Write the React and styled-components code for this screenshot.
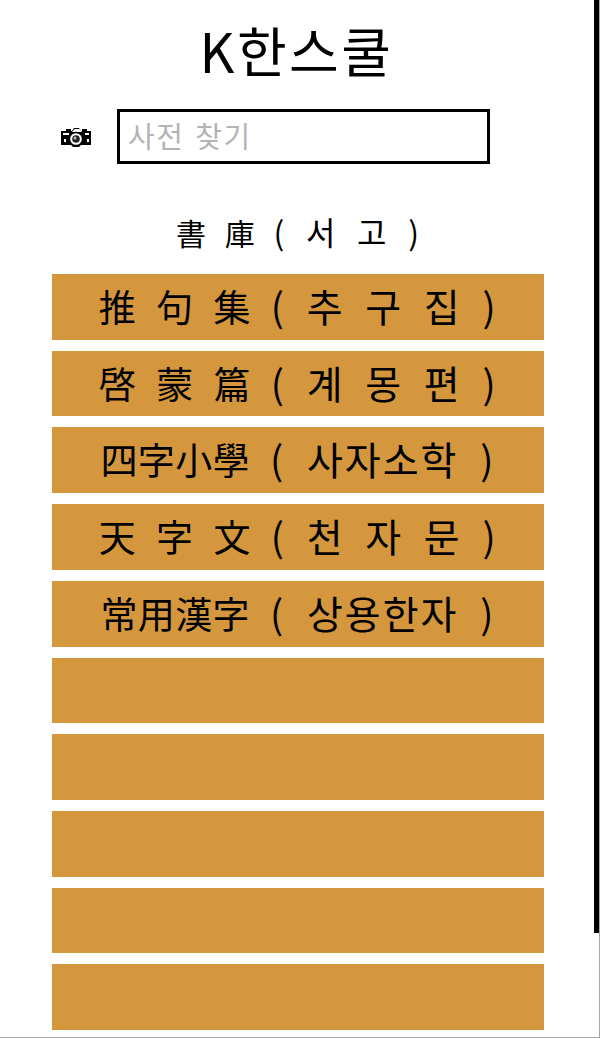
import React from 'react'
import styled, { createGlobalStyle } from 'styled-components'

const GlobalStyle = createGlobalStyle`
	html, body {
		margin: 0;
		padding: 0;
		background: #fff;
	}
	body {
		font-family: "Noto Sans CJK KR", "Noto Sans", sans-serif;
	}
`
const Page = styled.div`
	position: relative;
	box-sizing: border-box;
	width: 600px;
	height: 1038px;
	overflow: hidden;
	display: flex;
	flex-direction: column;
	align-items: center;
	background: #fff;
	color: #000;
	border-right: 1px solid #a8a8a8;
	border-bottom: 1px solid #a8a8a8;
`
const ScrollThumb = styled.div`
	position: absolute;
	top: 0;
	right: -1px;
	width: 6px;
	height: 933px;
	background: #000;
`
const Title = styled.h1`
	margin: 13px 0 0;
	padding-right: 6px;
	height: 74px;
	line-height: 74px;
	font-size: 54px;
	font-weight: 400;
	letter-spacing: 2.5px;
`
const SearchRow = styled.div`
	align-self: flex-start;
	display: flex;
	align-items: center;
	margin: 22px 0 0 60px;
	gap: 25px;
`
const SearchInput = styled.input`
	box-sizing: border-box;
	width: 373px;
	height: 55px;
	padding: 0 8px 4px;
	background: #fff;
	border: 3px solid #000;
	border-radius: 0;
	outline: none;
	font-family: inherit;
	font-size: 29px;
	letter-spacing: 1.5px;
	word-spacing: 3px;
	color: #000;
	&::placeholder {
		color: #b4b4b4;
		opacity: 1;
	}
`
const Shelf = styled.h2`
	margin: 39px 0 0;
	padding-right: 3px;
	height: 56px;
	line-height: 56px;
	font-size: 30px;
	font-weight: 400;
	white-space: pre;
	word-spacing: 12px;
`
const ShelfHangul = styled.span`
	font-size: 32px;
	letter-spacing: 1px;
	word-spacing: 12.5px;
`
const BookList = styled.div`
	align-self: flex-start;
	margin: 15px 0 0 52px;
	width: 492px;
	display: flex;
	flex-direction: column;
	gap: 11px;
`
const BookButton = styled.div`
	height: 65.72px;
	line-height: 62px;
	text-align: center;
	background: #d4973e;
	font-size: 37px;
	white-space: pre;
	word-spacing: 12px;
`
const BookHanja = styled.span`
	letter-spacing: ${props => (props.$tight ? '0.3px' : '0')};
`
const BookHangul = styled.span`
	font-size: 39px;
	letter-spacing: ${props => (props.$tight ? '2px' : '1.5px')};
	word-spacing: 11px;
`
const CameraIcon = () => (
	<svg width="32" height="20" viewBox="0 0 32 20" aria-hidden="true">
		<path d="M1 4h5V2h5v2h1l2-3h5l2 3h1V2h5v2h4v14H21a6 6 0 0 1-10 0H1z" fill="#000" />
		<path d="M12 5l2.500-3h5L22 5z" fill="#fff" />
		<rect x="3" y="6" width="6" height="2" fill="#fff" />
		<rect x="25" y="6" width="4" height="2" fill="#fff" />
		<circle cx="16" cy="12" r="6.500" fill="#fff" stroke="#000" strokeWidth="1.300" />
		<circle cx="16" cy="12" r="3.800" fill="#222" />
		<circle cx="15" cy="11" r="1.500" fill="#bbb" />
		<rect x="4" y="12" width="2" height="3" fill="#fff" />
		<rect x="27" y="12" width="2" height="3" fill="#fff" />
	</svg>
)
const books = [
	['推 句 集', '추 구 집'],
	['啓 蒙 篇', '계 몽 편'],
	['四字小學', '사자소학', true],
	['天 字 文', '천 자 문'],
	['常用漢字', '상용한자', true],
	null, null, null, null, null,
]

export default function App() {
	return (
		<Page>
			<GlobalStyle />
			<Title>K한스쿨</Title>
			<SearchRow>
				<CameraIcon />
				<SearchInput placeholder="사전 찾기" />
			</SearchRow>
			<Shelf>書 庫 <ShelfHangul>( 서 고 )</ShelfHangul></Shelf>
			<BookList>
				{books.map((book, i) => (
					<BookButton key={i}>
						{book && (
							<>
								<BookHanja $tight={book[2]}>{book[0]}</BookHanja>{' '}
								<BookHangul $tight={book[2]}>( {book[1]} )</BookHangul>
							</>
						)}
					</BookButton>
				))}
			</BookList>
			<ScrollThumb />
		</Page>
	)
}
